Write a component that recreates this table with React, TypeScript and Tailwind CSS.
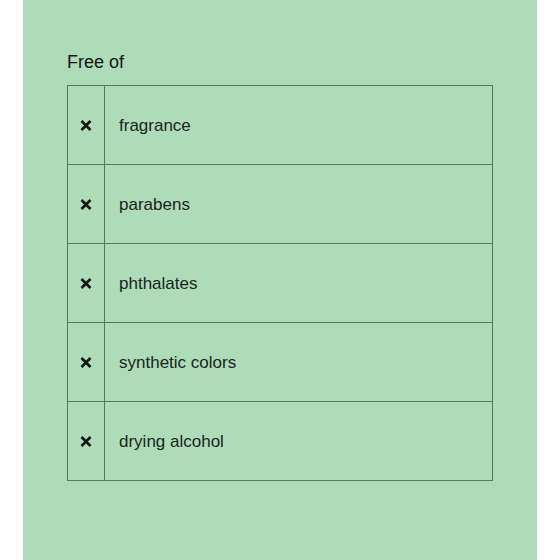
const items = [
  "fragrance",
  "parabens",
  "phthalates",
  "synthetic colors",
  "drying alcohol",
];

function Cross() {
  return (
    <svg width="12" height="11" viewBox="0 0 12 11" className="text-[#121212]">
      <path
        d="M1.5 1L10.5 10M10.5 1L1.5 10"
        stroke="currentColor"
        strokeWidth="2.6"
        fill="none"
      />
    </svg>
  );
}

export default function App() {
  return (
    <div className="w-[560px] h-[560px] bg-white font-['Liberation_Sans',Arial,sans-serif]">
      <div className="ml-[23px] w-[514px] h-full bg-[#aedcb8] pt-[50px] pl-[44px]">
        <h2 className="text-[18px] leading-[24px] text-[#141414] mb-[11px]">
          Free of
        </h2>
        <div className="w-[426px] border-t border-x border-[#4f7d59]">
          {items.map((item) => (
            <div
              key={item}
              className="flex h-[79px] border-b border-[#4f7d59]"
            >
              <div className="w-[37px] border-r border-[#4f7d59] flex items-center justify-center">
                <Cross />
              </div>
              <div className="flex items-center pl-[14px] pt-[2px] text-[17px] leading-[24px] text-[#1b241d]">
                {item}
              </div>
            </div>
          ))}
        </div>
      </div>
    </div>
  );
}
